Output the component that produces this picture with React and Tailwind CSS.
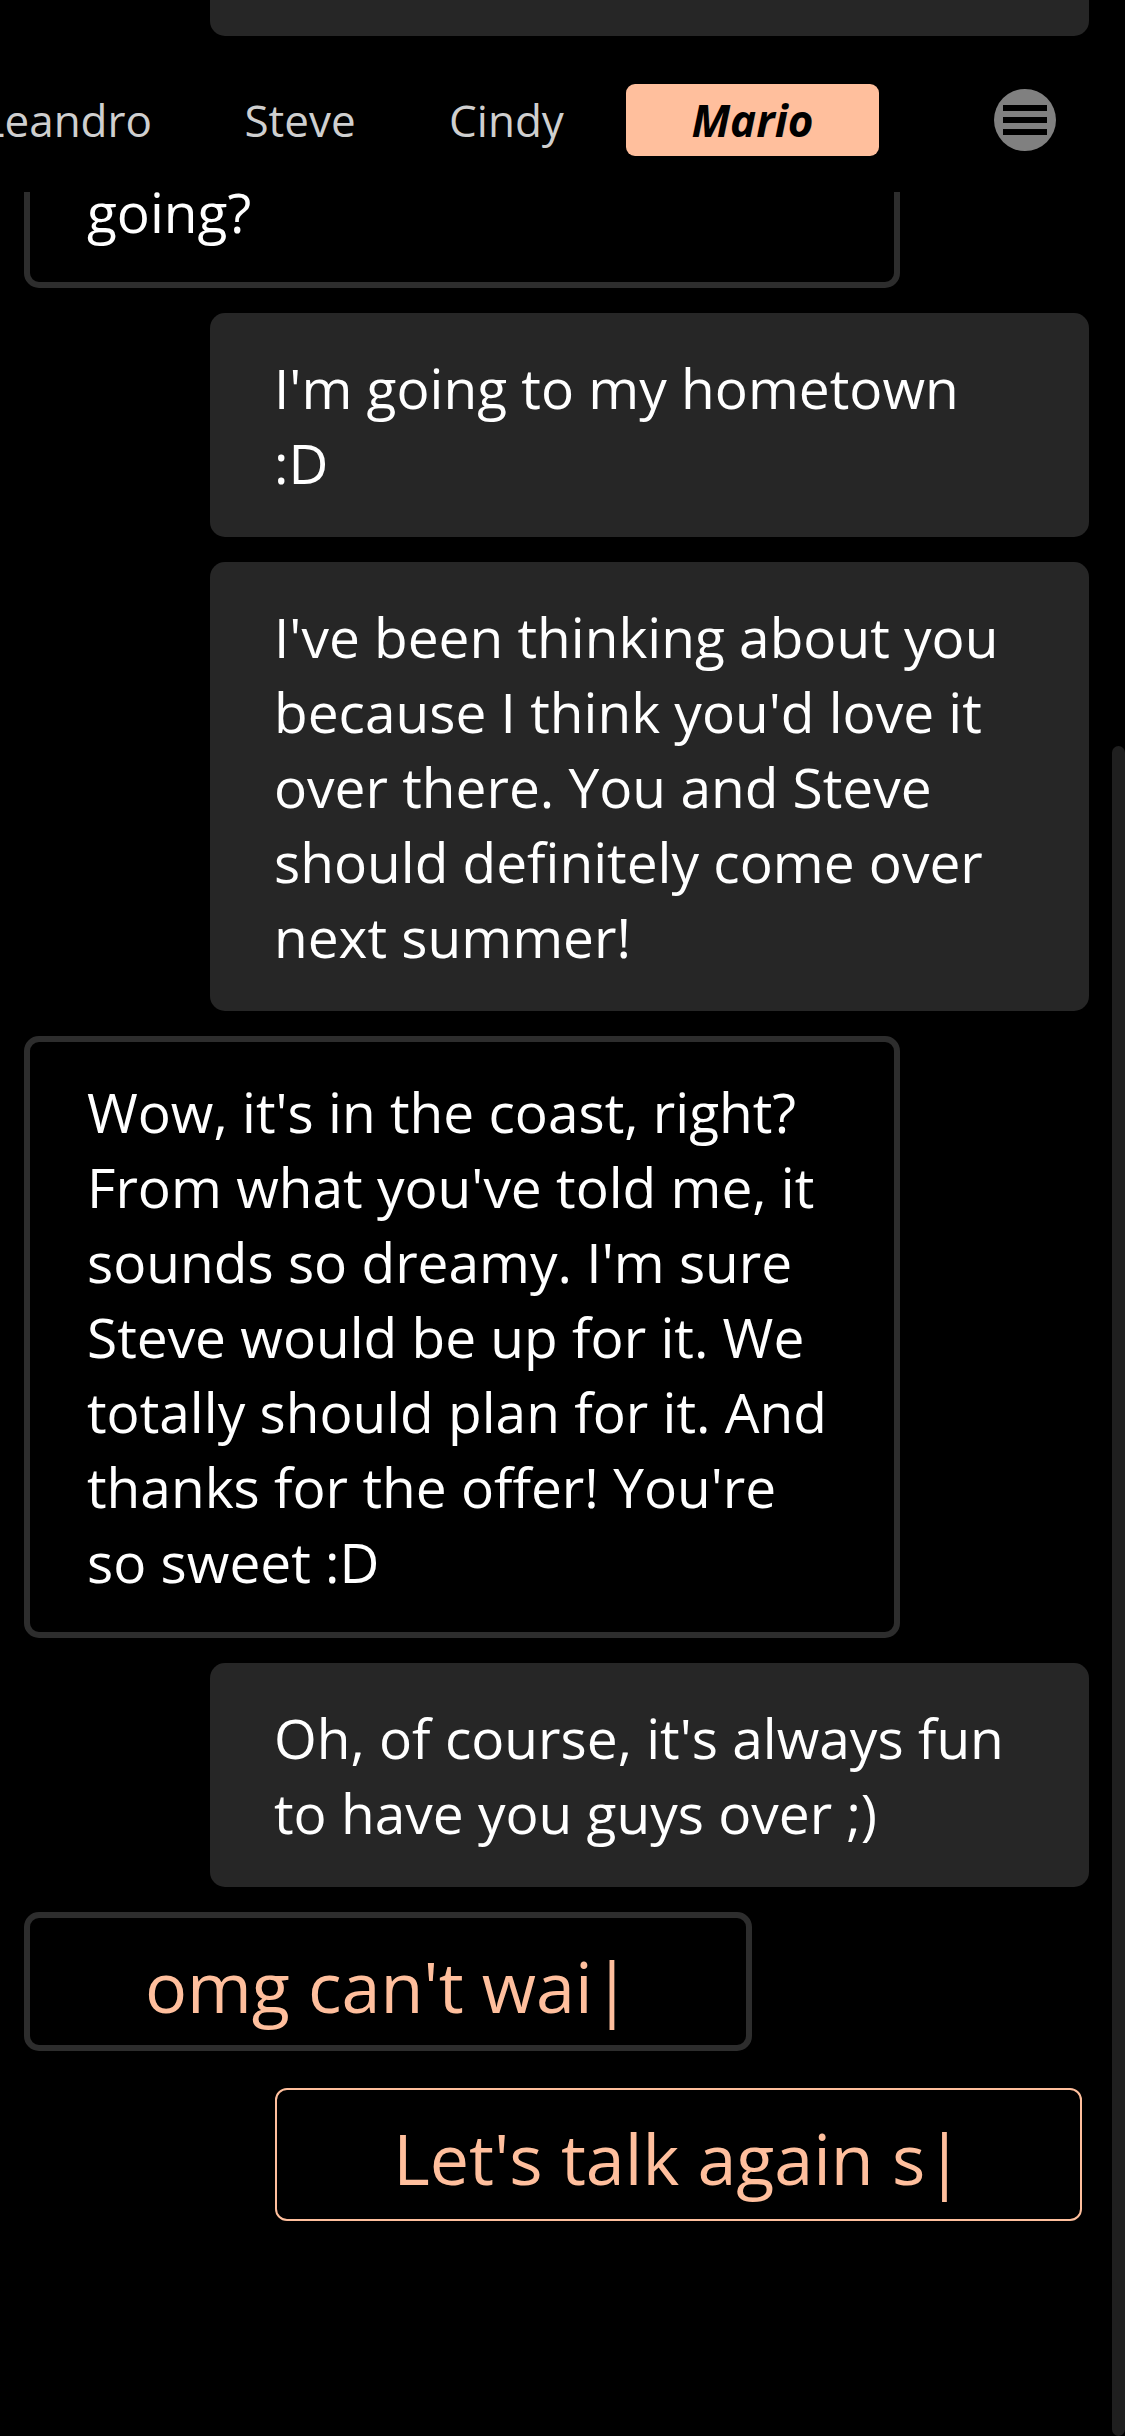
import React from 'react';

const messages = [
  { id: 1, from: 'them', lines: ['Hey Mario! How have you been?', "It's been forever!"] },
  {
    id: 2,
    from: 'me',
    lines: ['Not much, just packing! I finally', "got some days off, so I'm taking", 'to get out of the city for a bit :)'],
  },
  { id: 3, from: 'them', lines: ['Oh nice!! And where are you', 'going?'] },
  { id: 4, from: 'me', lines: ["I'm going to my hometown", ':D'] },
  {
    id: 5,
    from: 'me',
    lines: [
      "I've been thinking about you",
      "because I think you'd love it",
      'over there. You and Steve',
      'should definitely come over',
      'next summer!',
    ],
  },
  {
    id: 6,
    from: 'them',
    lines: [
      "Wow, it's in the coast, right?",
      "From what you've told me, it",
      "sounds so dreamy. I'm sure",
      'Steve would be up for it. We',
      'totally should plan for it. And',
      "thanks for the offer! You're",
      'so sweet :D',
    ],
  },
  { id: 7, from: 'me', lines: ["Oh, of course, it's always fun", 'to have you guys over ;)'] },
];

const Bubble = ({ from, lines }) => {
  if (from === 'me') {
    return (
      <div className="w-[879px] shrink-0 self-end rounded-[15px] bg-[#262626] px-[64px] py-[37px] text-[55px] leading-[75px] text-white">
        {lines.map((line, i) => (
          <span key={i} className="block whitespace-nowrap">{line}</span>
        ))}
      </div>
    );
  }
  return (
    <div className="w-[876px] shrink-0 self-start rounded-[15px] border-[6px] border-[#2d2d2d] bg-black pb-[33px] pl-[57px] pr-[40px] pt-[32px] text-[55px] leading-[75px] text-white">
      {lines.map((line, i) => (
        <span key={i} className="block whitespace-nowrap">{line}</span>
      ))}
    </div>
  );
};

const MenuButton = () => (
  <button className="ml-[115px] shrink-0">
    <svg width="62" height="62" viewBox="0 0 62 62">
      <circle cx="31" cy="31" r="31" fill="#808080" />
      <rect x="9" y="16" width="44" height="6" fill="#000" />
      <rect x="9" y="28" width="44" height="6" fill="#000" />
      <rect x="9" y="40" width="44" height="6" fill="#000" />
    </svg>
  </button>
);

const App = () => {
  return (
    <div className="relative h-screen overflow-hidden bg-black font-['Open_Sans',sans-serif]">
      {/* Chat, pinned to the bottom like a scrolled conversation */}
      <div className="flex h-full flex-col justify-end gap-[25px] pb-[215px] pl-[24px] pr-[36px]">
        {messages.map((m) => (
          <Bubble key={m.id} from={m.from} lines={m.lines} />
        ))}

        {/* Drafts being typed */}
        <div className="flex h-[139px] w-[728px] shrink-0 items-center justify-center self-start rounded-[15px] border-[6px] border-[#2d2d2d] pt-[9px] text-[70px] text-[#ffbf9d]">
          <span className="whitespace-nowrap">omg can't wai|</span>
        </div>
        <div className="mr-[7px] mt-[12px] flex h-[133px] w-[807px] shrink-0 items-center justify-center self-end rounded-[12px] border-2 border-[#ffbf9d] pt-[7px] text-[70px] text-[#ffbf9d]">
          <span className="whitespace-nowrap">Let's talk again s|</span>
        </div>
      </div>

      {/* Contact tabs */}
      <div className="absolute left-0 right-0 top-[48px] flex h-[144px] items-center bg-black text-[44px] text-[#cfcfcf]">
        <div className="flex w-[152px] shrink-0 justify-end overflow-hidden whitespace-nowrap">Leandro</div>
        <div className="ml-[46px] w-[204px] shrink-0 text-center">Steve</div>
        <div className="w-[209px] shrink-0 text-center">Cindy</div>
        <div className="ml-[15px] flex h-[72px] w-[253px] shrink-0 items-center justify-center rounded-[9px] bg-[#ffbf9d] font-bold italic text-black">
          Mario
        </div>
        <MenuButton />
      </div>

      {/* Scroll thumb */}
      <div className="absolute bottom-0 right-0 top-[746px] w-[13px] rounded-full bg-[#1f1f1f]" />
    </div>
  );
};

export default App;
